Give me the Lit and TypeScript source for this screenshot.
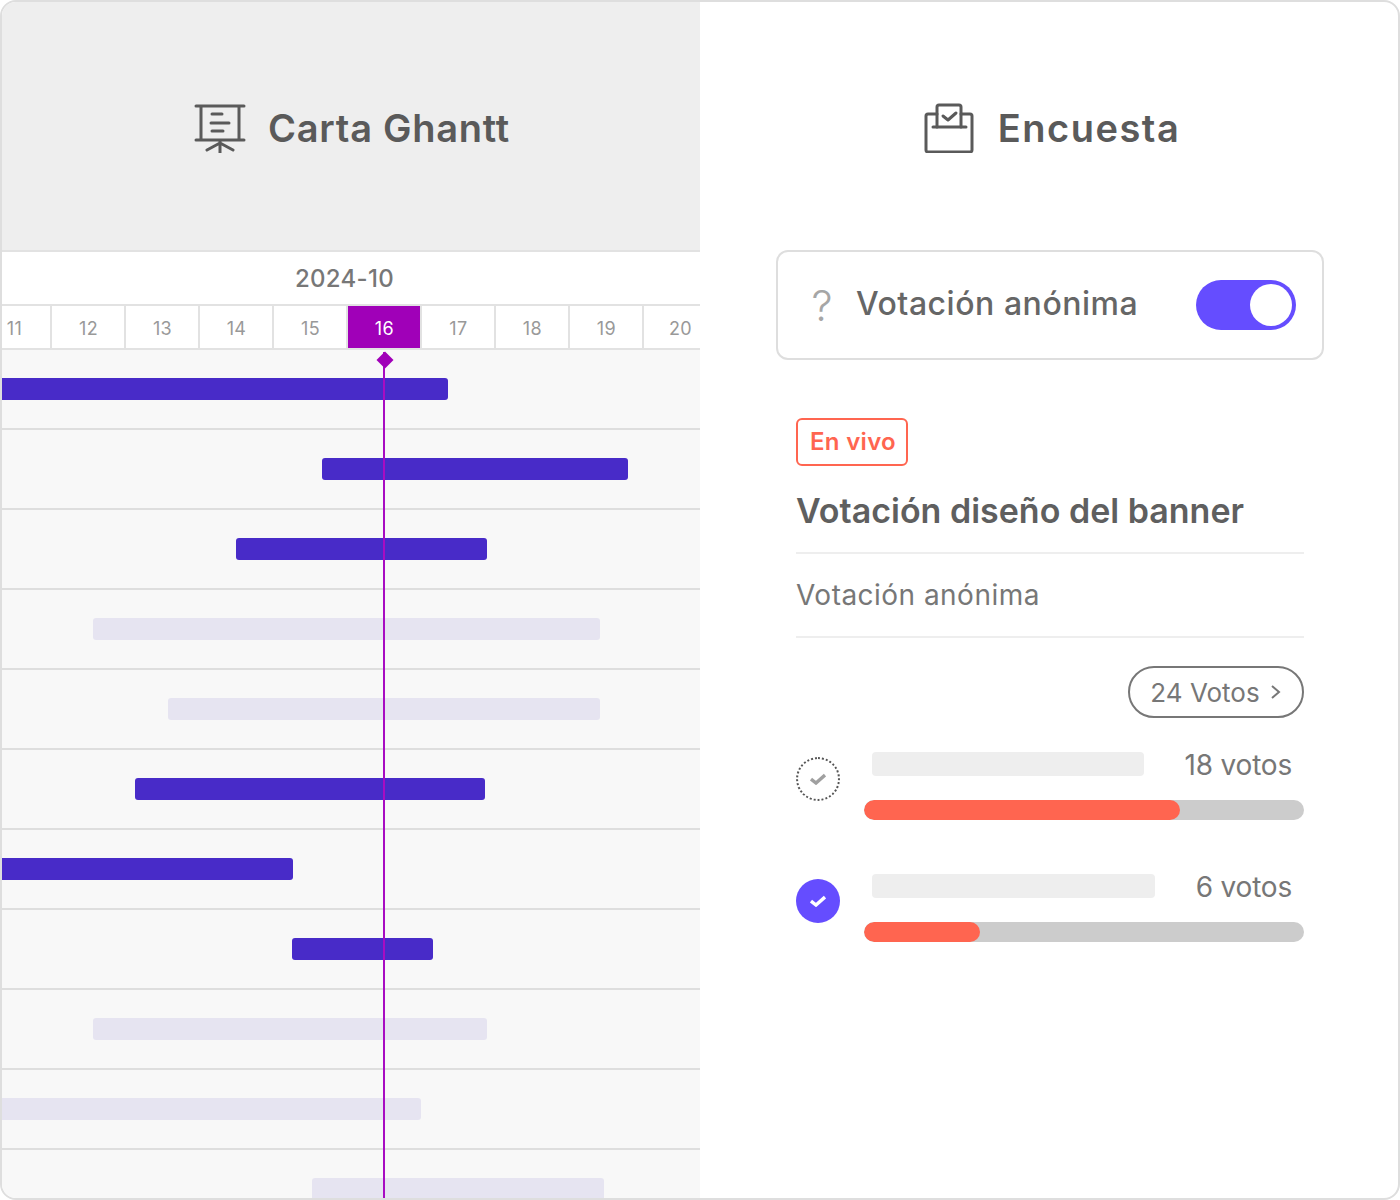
import { LitElement, html, css } from 'lit';
import { customElement } from 'lit/decorators.js';

const DAYS = [11, 12, 13, 14, 15, 16, 17, 18, 19, 20];
const TODAY = 16;

// left offset and width in px from the chart's left edge
const BARS = [
  { x: -10, w: 456, on: true },
  { x: 320, w: 306, on: true },
  { x: 234, w: 251, on: true },
  { x: 91, w: 507, on: false },
  { x: 166, w: 432, on: false },
  { x: 133, w: 350, on: true },
  { x: -10, w: 301, on: true },
  { x: 290, w: 141, on: true },
  { x: 91, w: 394, on: false },
  { x: -10, w: 429, on: false },
  { x: 310, w: 292, on: false },
];

const VOTES = [
  { count: '18 votos', fill: 316, picked: false },
  { count: '6 votos', fill: 116, picked: true },
];

const checkMark = html`<svg width="16" height="12" viewBox="0 0 16 12" fill="none" aria-hidden="true">
  <path d="M1 6 6 10 15 2" stroke="currentColor" stroke-width="3.4" />
</svg>`;

@customElement('app-root')
export class AppRoot extends LitElement {
  static styles = css`
    :host {
      display: block;
      width: 1400px;
      height: 1200px;
      font-family: 'Inter', 'Liberation Sans', sans-serif;
    }

    .frame {
      box-sizing: border-box;
      width: 1400px;
      height: 1200px;
      display: flex;
      border: 2px solid #dedede;
      border-radius: 16px;
      overflow: hidden;
      background: #fff;
    }

    .gantt {
      position: relative;
      width: 698px;
      flex: none;
      overflow: hidden;
    }

    .head {
      box-sizing: border-box;
      display: flex;
      align-items: center;
      justify-content: center;
      padding-top: 4px;
      color: #5a5a5a;
      font-size: 38px;
      font-weight: 600;
      line-height: 44px;
    }

    .gantt .head {
      height: 250px;
      gap: 22px;
      padding-left: 2px;
      background: #eee;
      border-bottom: 2px solid #e2e2e2;
      letter-spacing: 0.75px;
    }

    .month {
      height: 52px;
      display: flex;
      align-items: center;
      justify-content: center;
      padding-right: 13px;
      border-bottom: 2px solid #e2e2e2;
      color: #777;
      font-size: 24px;
      font-weight: 500;
      letter-spacing: 0.3px;
    }

    .days {
      display: flex;
      margin-left: -24px;
      border-bottom: 2px solid #e2e2e2;
    }

    .day {
      flex: none;
      box-sizing: border-box;
      width: 74px;
      height: 42px;
      padding: 2px 0 0 1px;
      border-right: 2px solid #e2e2e2;
      display: flex;
      align-items: center;
      justify-content: center;
      color: #999;
      font-size: 18px;
      letter-spacing: 0.4px;
    }

    .day.today {
      background: #a000b8;
      color: #fff;
    }

    .row {
      box-sizing: border-box;
      height: 80px;
      padding-top: 28px;
      background: #f8f8f8;
      border-bottom: 2px solid #dedede;
    }

    .bar {
      height: 22px;
      border-radius: 3px;
      background: #e6e4f1;
    }

    .bar.on {
      background: #482bc8;
    }

    .marker {
      position: absolute;
      left: 381px;
      top: 350px;
      bottom: 0;
      width: 2px;
      background: #a80cc2;
    }

    .marker::before {
      content: '';
      position: absolute;
      left: -4.5px;
      top: 2px;
      width: 12px;
      height: 12px;
      background: #a000b8;
      transform: rotate(45deg);
    }

    .poll {
      flex: 1;
      min-width: 0;
      padding: 0 74px 0 76px;
    }

    .poll .head {
      height: 248px;
      gap: 24px;
      padding-left: 4px;
      letter-spacing: 1.5px;
    }

    .toggle-card {
      box-sizing: border-box;
      height: 110px;
      display: flex;
      align-items: center;
      padding: 0 26px 0 33px;
      border: 2px solid #dedede;
      border-radius: 12px;
      color: #666;
      font-size: 32px;
      font-weight: 500;
    }

    .hint {
      width: 22px;
      margin-right: 23px;
      color: #a6a6a6;
      font-size: 42px;
      font-weight: 300;
      text-align: center;
    }

    .label {
      flex: 1;
      margin-bottom: 4px;
      letter-spacing: 0.53px;
    }

    .switch {
      box-sizing: border-box;
      width: 100px;
      height: 50px;
      padding: 4px;
      display: flex;
      justify-content: flex-end;
      border-radius: 25px;
      background: #654dff;
    }

    .switch i {
      display: block;
      width: 42px;
      height: 42px;
      border-radius: 50%;
      background: #fff;
    }

    .detail {
      padding: 58px 20px 0;
    }

    .live {
      display: inline-block;
      box-sizing: border-box;
      width: 112px;
      height: 48px;
      padding-left: 12px;
      border: 2px solid #ff6550;
      border-radius: 6px;
      color: #ff6550;
      font-size: 24px;
      font-weight: 600;
      line-height: 44px;
      letter-spacing: 0.3px;
    }

    h2 {
      margin: 20px 0 0;
      height: 66px;
      border-bottom: 2px solid #eee;
      color: #5f5f5f;
      font-size: 34px;
      font-weight: 600;
      line-height: 50px;
    }

    .sub {
      height: 82px;
      border-bottom: 2px solid #eee;
      color: #777;
      font-size: 28px;
      line-height: 82px;
      letter-spacing: 0.47px;
    }

    .total-wrap {
      display: flex;
      justify-content: flex-end;
      padding: 28px 0 34px;
    }

    .total {
      box-sizing: border-box;
      width: 176px;
      height: 52px;
      display: flex;
      align-items: center;
      justify-content: center;
      gap: 10px;
      border: 2px solid #777;
      border-radius: 26px;
      color: #777;
      font-size: 26px;
    }

    .votes {
      display: flex;
      flex-direction: column;
      gap: 54px;
    }

    .vote {
      display: flex;
      gap: 24px;
    }

    .mark {
      flex: none;
      box-sizing: border-box;
      width: 44px;
      height: 44px;
      margin-top: 5px;
      display: flex;
      align-items: center;
      justify-content: center;
      border-radius: 50%;
      border: 2px dotted #555;
      color: #a0a0a0;
    }

    .mark.picked {
      border: none;
      background: #654dff;
      color: #fff;
    }

    .result {
      flex: 1;
      min-width: 0;
    }

    .result-top {
      height: 24px;
      display: flex;
      align-items: center;
      gap: 41px;
      padding: 0 12px 0 8px;
      margin-bottom: 24px;
      color: #777;
      font-size: 28px;
      letter-spacing: -0.2px;
    }

    .result-top span {
      position: relative;
      top: 1px;
    }

    .name {
      flex: 1;
      height: 24px;
      border-radius: 4px;
      background: #eee;
    }

    .track {
      height: 20px;
      border-radius: 10px;
      background: #ccc;
      overflow: hidden;
    }

    .fill {
      height: 20px;
      border-radius: 10px;
      background: #ff6550;
    }
  `;

  render() {
    return html`
      <div class="frame">
        <section class="gantt">
          <div class="head">
            <svg width="52" height="50" viewBox="0 0 52 50" fill="none" stroke="currentColor" stroke-width="3" stroke-linecap="round" aria-hidden="true">
              <path d="M2 3h48M7 3v34M45 3v34M2 37h48M26 37v13M26 40 13 47M26 40l13 7" />
              <path d="M18 11h10M17 20h18M18 28h11" />
            </svg>
            Carta Ghantt
          </div>
          <div class="month">2024-10</div>
          <div class="days">
            ${DAYS.map(d => html`<div class="day ${d === TODAY ? 'today' : ''}">${d}</div>`)}
          </div>
          ${BARS.map(b => html`
            <div class="row">
              <div class="bar ${b.on ? 'on' : ''}" style="margin-left:${b.x}px;width:${b.w}px"></div>
            </div>
          `)}
          <div class="marker"></div>
        </section>

        <section class="poll">
          <div class="head">
            <svg width="50" height="50" viewBox="0 0 50 50" fill="none" stroke="currentColor" stroke-width="3" stroke-linecap="round" stroke-linejoin="round" aria-hidden="true">
              <path d="M13 11H4a2 2 0 0 0-2 2v34a2 2 0 0 0 2 2h42a2 2 0 0 0 2-2V13a2 2 0 0 0-2-2h-9" />
              <path d="M13 24V4a2 2 0 0 1 2-2h20a2 2 0 0 1 2 2v20" />
              <path d="M9 24h33M19 13l5 4 8-7" />
            </svg>
            Encuesta
          </div>

          <div class="toggle-card">
            <span class="hint">?</span>
            <span class="label">Votación anónima</span>
            <div class="switch"><i></i></div>
          </div>

          <div class="detail">
            <span class="live">En vivo</span>
            <h2>Votación diseño del banner</h2>
            <div class="sub">Votación anónima</div>
            <div class="total-wrap">
              <div class="total">
                24 Votos
                <svg width="12" height="16" viewBox="0 0 12 16" fill="none" stroke="currentColor" stroke-width="2" aria-hidden="true">
                  <path d="M2 2l7 6-7 6" />
                </svg>
              </div>
            </div>
            <div class="votes">
              ${VOTES.map(v => html`
                <div class="vote">
                  <div class="mark ${v.picked ? 'picked' : ''}">${checkMark}</div>
                  <div class="result">
                    <div class="result-top">
                      <div class="name"></div>
                      <span>${v.count}</span>
                    </div>
                    <div class="track"><div class="fill" style="width:${v.fill}px"></div></div>
                  </div>
                </div>
              `)}
            </div>
          </div>
        </section>
      </div>
    `;
  }
}

declare global {
  interface HTMLElementTagNameMap {
    'app-root': AppRoot;
  }
}
